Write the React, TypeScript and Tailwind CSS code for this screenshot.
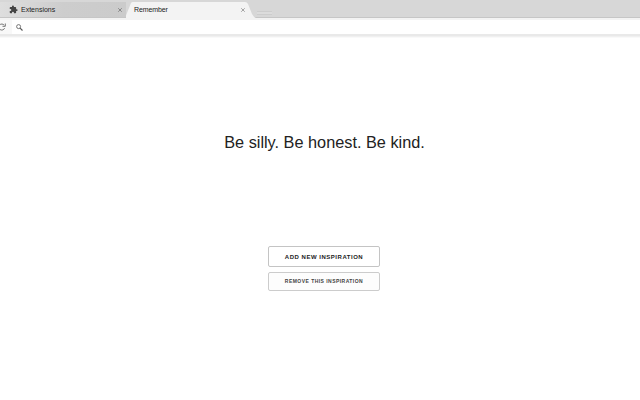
import { X } from 'lucide-react'

interface Action {
  label: string
  className: string
}

const quote = 'Be silly. Be honest. Be kind.'

const actions: Action[] = [
  {
    label: 'Add new inspiration',
    className: 'h-[21px] pt-[2px] text-[6px] tracking-[0.52px] text-[#222] border-[#c4c4c4]',
  },
  {
    label: 'Remove this inspiration',
    className: 'h-[19px] pt-px text-[5px] tracking-[0.46px] text-[#444] border-[#cccccc] bg-[#fdfdfd]',
  },
]

function PuzzleIcon() {
  return (
    <svg className="h-[9px] w-[9px] shrink-0" viewBox="0 0 24 24" fill="#444">
      <path d="M20.500 11H19V7a2 2 0 0 0-2-2h-4V3.500a2.500 2.500 0 0 0-5 0V5H4a2 2 0 0 0-2 2v3.800h1.500a2.700 2.700 0 0 1 0 5.400H2V20a2 2 0 0 0 2 2h3.800v-1.500a2.700 2.700 0 0 1 5.400 0V22H17a2 2 0 0 0 2-2v-4h1.500a2.500 2.500 0 0 0 0-5z" />
    </svg>
  )
}

function ReloadIcon() {
  return (
    <svg className="-ml-[2px] h-[8px] w-[8px] shrink-0" viewBox="0 0 8 8" fill="none" stroke="#666" strokeWidth="0.9">
      <path d="M6.600 5.200 A3 3 0 1 1 6.200 2.200" />
      <path d="M7.300 0.500 V3.300 H4.500" />
    </svg>
  )
}

function SearchIcon() {
  return (
    <svg className="ml-[4px] h-[7px] w-[7px] shrink-0" viewBox="0 0 7 7" fill="none" stroke="#555">
      <circle cx="2.600" cy="2.600" r="2" strokeWidth="0.8" />
      <path d="M4.100 4.100 L6.500 6.500" strokeWidth="1.1" />
    </svg>
  )
}

function TabStrip() {
  return (
    <div className="flex h-[18px] border-b border-[#c6c6c6] bg-[#d7d7d7]">
      {/* Inactive tab */}
      <div className="mt-[2px] flex h-[15px] w-[126px] items-center bg-gradient-to-r from-[#dedede] via-[#cdcdcd] to-[#cbcbcb] pl-[9px]">
        <PuzzleIcon />
        <span className="ml-[3px] text-[7px] leading-none text-[#222]">Extensions</span>
        <X className="mr-[3px] ml-auto h-[6px] w-[6px] text-[#444]" />
      </div>

      {/* Active tab */}
      <div className="relative mt-[2px] h-[16px] w-[130px] shrink-0">
        <svg className="absolute inset-0" width="130" height="16" viewBox="0 0 130 16">
          <path d="M-1 16 L5 1 Q5.500 0 7 0 H119 Q121 0 122 2 L126 12 Q127.500 15 130 16 Z" fill="#f3f3f3" />
        </svg>
        <div className="relative flex h-[15px] items-center pr-[10px] pl-[8px]">
          <span className="text-[7px] leading-none tracking-[-0.1px] text-[#222]">Remember</span>
          <X className="ml-auto h-[6px] w-[6px] text-[#555]" />
        </div>
      </div>

      {/* New tab button */}
      <div className="mt-[11px] ml-[1px] h-[4px] w-[15px] border-y border-[#cdcdcd] bg-[#dcdcdc]"></div>
    </div>
  )
}

function Toolbar() {
  return (
    <div className="flex h-[20px] flex-col">
      <div className="h-[2px] bg-[#f3f3f3]"></div>
      <div className="flex h-[14px] items-center bg-white">
        <div className="flex h-full w-[12px] items-center bg-[#f8f8f8]">
          <ReloadIcon />
        </div>
        <SearchIcon />
      </div>
      <div className="h-[2px] bg-[#e9e9e9]"></div>
      <div className="h-px bg-[#f0f0f0]"></div>
      <div className="h-px bg-[#f9f9f9]"></div>
    </div>
  )
}

export default function App() {
  return (
    <div className="flex h-screen flex-col overflow-hidden bg-white font-['Liberation_Sans',Arial,sans-serif]">
      <header>
        <TabStrip />
        <Toolbar />
      </header>

      <main className="flex flex-col items-center pt-[94px] pl-[8px]">
        <h1 className="pl-[1px] text-[16.3px] leading-[20px] text-[#222]">{quote}</h1>

        <div className="mt-[94px] flex w-[112px] flex-col gap-[5px]">
          {actions.map((action) => (
            <button
              key={action.label}
              className={`flex items-center justify-center rounded-[2px] border font-bold whitespace-nowrap uppercase ${action.className}`}
            >
              {action.label}
            </button>
          ))}
        </div>
      </main>
    </div>
  )
}
